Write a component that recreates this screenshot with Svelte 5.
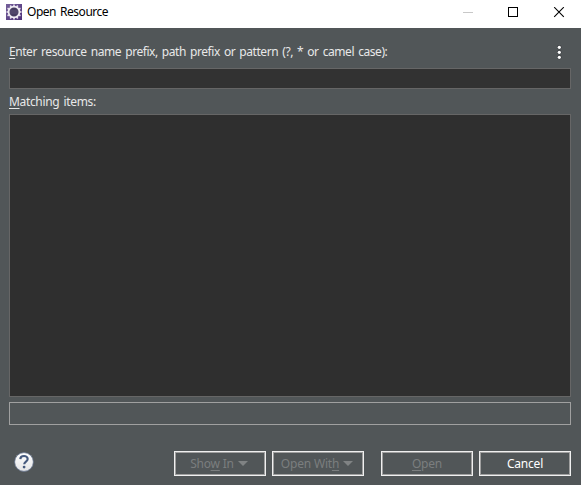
<script>
  const teeth = Array.from({ length: 12 }, (_, i) => i * 30);
</script>

<div class="dialog">
  <header class="titlebar">
    <svg class="logo" width="16" height="16" viewBox="0 0 16 16">
      <defs>
        <linearGradient id="plum" x1="0" y1="0" x2="1" y2="1">
          <stop offset="0" stop-color="#75609a" />
          <stop offset="1" stop-color="#4c2f78" />
        </linearGradient>
      </defs>
      <rect width="16" height="16" fill="url(#plum)" />
      {#each teeth as a}
        <rect x="7.2" y="0.5" width="1.6" height="2.6" fill="#e6e0ee" transform="rotate({a} 8 8)" />
      {/each}
      <circle cx="8" cy="8" r="5.4" fill="#453b60" stroke="#f0edf3" stroke-width="1.7" />
      <path d="M4 7h8M4 9h8" stroke="#6d6384" stroke-width=".6" />
    </svg>
    <span class="title">Open Resource</span>
    <svg class="winctl" width="102" height="12" viewBox="0 0 102 12">
      <path d="M0 5.5h10" stroke="#c8c8c8" />
      <rect x="45.5" y=".5" width="9" height="9" fill="none" stroke="#000" />
      <path d="M91.2.2l9.6 9.6M100.8.2l-9.6 9.6" stroke="#000" stroke-width="1.1" />
    </svg>
  </header>

  <main>
    <div class="row prompt">
      <label for="pattern" class="t1"><u>E</u>nter resource name prefix, path prefix or pattern (?, * or camel case):</label>
      <svg class="dots" width="6" height="16" viewBox="0 0 6 16">
        {#each [3.3, 8.3, 13.3] as y}
          <circle cx="3.3" cy={y} r="2.2" fill="#3d4143" />
          <circle cx="3.3" cy={y} r="1.6" fill="#fff" />
        {/each}
      </svg>
    </div>
    <input id="pattern" type="text" />
    <div class="row matching"><span class="t2"><u>M</u>atching items:</span></div>
    <div class="list"></div>
    <div class="status"></div>
  </main>

  <footer>
    <svg class="help" width="20" height="20" viewBox="0 0 20 20">
      <defs>
        <linearGradient id="disc" x1="0" y1="0" x2="0" y2="1">
          <stop offset="0" stop-color="#fff" />
          <stop offset="1" stop-color="#e4e4e6" />
        </linearGradient>
      </defs>
      <circle cx="10" cy="10" r="9.4" fill="url(#disc)" stroke="#5e6d89" stroke-width=".8" />
      <path d="M6.3 7.1C6.4 2.9 13.7 3 13.7 7c0 2.6-3.5 2.5-3.5 5.2" fill="none" stroke="#465a7e" stroke-width="2.1" />
      <circle cx="10.1" cy="15.1" r="1.4" fill="#465a7e" />
    </svg>
    <button class="off menu"><span class="t3">Sho<u>w</u> In</span><i></i></button>
    <button class="off menu"><span class="t3">Open Wit<u>h</u></span><i></i></button>
    <button class="off open"><span class="t3"><u>O</u>pen</span></button>
    <button><span class="t3">Cancel</span></button>
  </footer>
</div>

<style>
  .dialog {
    width: 581px;
    height: 485px;
    display: flex;
    flex-direction: column;
    background: #515658;
    color: #e8e8e8;
    font: 12px/16px "Noto Sans", "Noto Sans CJK KR", sans-serif;
    white-space: nowrap;
    overflow: hidden;
  }
  * { box-sizing: border-box; }
  .titlebar {
    height: 28px;
    flex: none;
    display: flex;
    align-items: flex-start;
    background: #fff;
    color: #000;
    padding: 4px 16px 0 6px;
  }
  .logo { flex: none; }
  .title { margin: 0 auto 0 5px; letter-spacing: -0.48px; word-spacing: 1.4px; }
  .winctl { margin-top: 3px; flex: none; }
  main { display: flex; flex-direction: column; padding: 0 10px 0 9px; }
  .row { display: flex; justify-content: space-between; }
  .prompt { height: 40px; padding: 16px 9px 0 0; }
  .t1 { letter-spacing: -0.44px; word-spacing: 1.4px; }
  .t2 { letter-spacing: -0.34px; word-spacing: 1.4px; }
  u { text-decoration: underline; text-decoration-thickness: 1px; text-underline-offset: 2px; text-decoration-skip-ink: none; }
  .dots { flex: none; }
  input {
    height: 21px;
    width: 100%;
    margin: 0;
    padding: 0 3px;
    border: 1px solid #666;
    border-radius: 0;
    background: #323232;
    color: #eee;
    font: inherit;
    outline: none;
  }
  .matching { height: 25px; padding-top: 5px; }
  .list { height: 283px; background: #2f2f2f; border: 1px solid #666; }
  .status { height: 23px; margin-top: 5px; border: 1px solid #a0a0a0; }
  footer { display: flex; align-items: flex-start; padding: 26px 10px 0 14px; }
  .help { flex: none; margin: 1px 140px 0 0; }
  button {
    flex: none;
    width: 92px;
    height: 25px;
    margin: 0 0 0 6px;
    padding: 0;
    display: flex;
    align-items: center;
    justify-content: center;
    background: #515658;
    border: 1px solid #f0f0f0;
    border-radius: 0;
    box-shadow: inset 0 0 0 1px #a0a0a0;
    color: #fff;
    font: inherit;
  }
  .help + button { margin-left: 0; }
  .menu { padding-right: 2px; }
  .open { margin-left: 17px; }
  .off { color: #7b7e7f; }
  i {
    margin-left: 4px;
    border: 5px solid transparent;
    border-top-color: #808384;
    border-bottom: 0;
  }
  .t3 { letter-spacing: -0.2px; }
</style>
